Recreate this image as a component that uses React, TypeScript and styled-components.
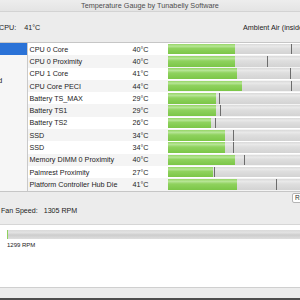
import React from 'react';
import styled, { createGlobalStyle } from 'styled-components';

const Global = createGlobalStyle`
  html, body { margin: 0; padding: 0; background: #ececec; overflow: hidden; }
  body { font-family: "Liberation Sans", Arial, sans-serif; }
  * { box-sizing: border-box; }
`;

const Window = styled.div`
  width: 420px;
  height: 300px;
  margin-left: -60px;
  display: flex;
  flex-direction: column;
  background: #ececec;
  color: #1c1c1c;
  font-size: 7.2px;
  border-bottom: 2px solid #4e4e4e;
`;

const TitleBar = styled.div`
  height: 12px;
  flex: none;
  display: flex;
  align-items: center;
  justify-content: center;
  background: linear-gradient(#ededed, #e4e4e4);
  border-bottom: 1px solid #d3d3d3;
  color: #4d4d4d;
  font-size: 7.25px;
`;

const Toolbar = styled.div`
  height: 30px;
  flex: none;
  display: flex;
  align-items: center;
  padding-left: 59px;
`;

const Readout = styled.div<{ $w?: number }>`
  display: flex;
  align-items: center;
  gap: 8px;
  width: ${p => (p.$w ? `${p.$w}px` : 'auto')};
  white-space: nowrap;
`;

const Main = styled.div`
  flex: none;
  display: flex;
  border-top: 1px solid #c6c6c6;
  border-bottom: 1px solid #c6c6c6;
  height: 149.6px;
`;

const Sidebar = styled.div`
  width: 88px;
  flex: none;
  background: #f6f6f6;
  border-right: 1px solid #c9c9c9;
  display: flex;
  flex-direction: column;
`;

const SideItem = styled.div<{ $selected?: boolean; $gap?: number }>`
  height: 12.3px;
  margin-top: ${p => p.$gap ?? 0}px;
  display: flex;
  align-items: center;
  padding-left: 8px;
  background: ${p => (p.$selected ? '#2a72d7' : 'transparent')};
  color: ${p => (p.$selected ? '#fff' : '#1c1c1c')};
  white-space: nowrap;
`;

const Table = styled.div`
  flex: 1;
  background: #fff;
  display: flex;
  flex-direction: column;
  overflow: hidden;
`;

const Row = styled.div<{ $alt: boolean }>`
  height: 12.3px;
  flex: none;
  display: grid;
  grid-template-columns: 104px 36px 1fr;
  align-items: center;
  background: ${p => (p.$alt ? '#f4f4f4' : '#ffffff')};
  white-space: nowrap;
`;

const NameCell = styled.div`
  padding-left: 1.5px;
`;

const TempCell = styled.div`
  padding-left: 0.5px;
`;

const BarTrack = styled.div`
  position: relative;
  height: 10.6px;
  background: linear-gradient(#d9d9d9 0%, #e9e9e9 22%, #dedede 45%, #d3d3d3 100%);
`;

const BarFill = styled.div`
  height: 100%;
  background: linear-gradient(#95d565 0%, #b6e595 22%, #8fd25e 45%, #7bc647 100%);
`;

const Tick = styled.div`
  position: absolute;
  top: 0;
  bottom: 0;
  width: 1.4px;
  background: #6c6c6c;
`;

const Controls = styled.div`
  flex: none;
  height: 32.4px;
  display: flex;
  flex-direction: column;
`;

const ButtonRow = styled.div`
  height: 12px;
  padding-left: 352px;
  padding-top: 1px;
`;

const PushButton = styled.div`
  width: 40px;
  height: 10px;
  background: #fff;
  border: 1px solid #b4b4b4;
  border-radius: 2px;
  display: flex;
  align-items: center;
  padding-left: 2px;
  font-size: 6.5px;
  color: #333;
`;

const FanRow = styled.div`
  flex: 1;
  display: flex;
  align-items: center;
  gap: 6px;
  padding-left: 61px;
  padding-bottom: 5px;
  font-size: 7.1px;
  white-space: nowrap;
`;

const FanPanel = styled.div`
  flex: 1;
  background: #fff;
  border-top: 1px solid #d6d6d6;
  padding-top: 5px;
  padding-left: 67px;
  display: flex;
  flex-direction: column;
  gap: 3px;
`;

const FanTrack = styled.div`
  height: 9px;
  display: flex;
  background: linear-gradient(#dadada 0%, #e2e2e2 30%, #cdcdcd 55%, #dedede 100%);
`;

const FanFill = styled.div`
  height: 100%;
  background: #8fd25e;
`;

const FanCaption = styled.div`
  font-size: 6px;
  color: #222;
`;

const Footer = styled.div`
  flex: none;
  height: 11px;
  border-top: 1px solid #cfcfcf;
  background: #ececec;
`;

type Sensor = { name: string; temp: number; max: number };

const sensors: Sensor[] = [
  { name: 'CPU 0 Core', temp: 40, max: 123 },
  { name: 'CPU 0 Proximity', temp: 40, max: 99 },
  { name: 'CPU 1 Core', temp: 41, max: 122 },
  { name: 'CPU Core PECI', temp: 44, max: 123 },
  { name: 'Battery TS_MAX', temp: 29, max: 51 },
  { name: 'Battery TS1', temp: 29, max: 52 },
  { name: 'Battery TS2', temp: 26, max: 47 },
  { name: 'SSD', temp: 34, max: 65 },
  { name: 'SSD', temp: 34, max: 65 },
  { name: 'Memory DIMM 0 Proximity', temp: 40, max: 76 },
  { name: 'Palmrest Proximity', temp: 27, max: 46 },
  { name: 'Platform Controller Hub Die', temp: 41, max: 108 },
];

export default function App() {
  return (
    <>
      <Global />
      <Window>
        <TitleBar>Temperature Gauge by Tunabelly Software</TitleBar>
        <Toolbar>
          <Readout $w={244}>
            <span>CPU:</span>
            <span>41°C</span>
          </Readout>
          <Readout>
            <span>Ambient Air (inside)</span>
          </Readout>
        </Toolbar>
        <Main>
          <Sidebar>
            <SideItem $selected>Sensors</SideItem>
            <SideItem>Fans</SideItem>
            <SideItem $gap={7}>Hard Drives: Ssd</SideItem>
          </Sidebar>
          <Table>
            {sensors.map((s, i) => (
              <Row key={i} $alt={i % 2 === 1}>
                <NameCell>{s.name}</NameCell>
                <TempCell>{s.temp}°C</TempCell>
                <BarTrack>
                  <BarFill style={{ width: `${(s.temp * 1.67).toFixed(1)}px` }} />
                  <Tick style={{ left: `${s.max}px` }} />
                </BarTrack>
              </Row>
            ))}
          </Table>
        </Main>
        <Controls>
          <ButtonRow>
            <PushButton>Reset</PushButton>
          </ButtonRow>
          <FanRow>
            <span>Fan Speed:</span>
            <span>1305 RPM</span>
          </FanRow>
        </Controls>
        <FanPanel>
          <FanTrack>
            <FanFill style={{ width: '1px' }} />
          </FanTrack>
          <FanCaption>1299 RPM</FanCaption>
        </FanPanel>
        <Footer />
      </Window>
    </>
  );
}
